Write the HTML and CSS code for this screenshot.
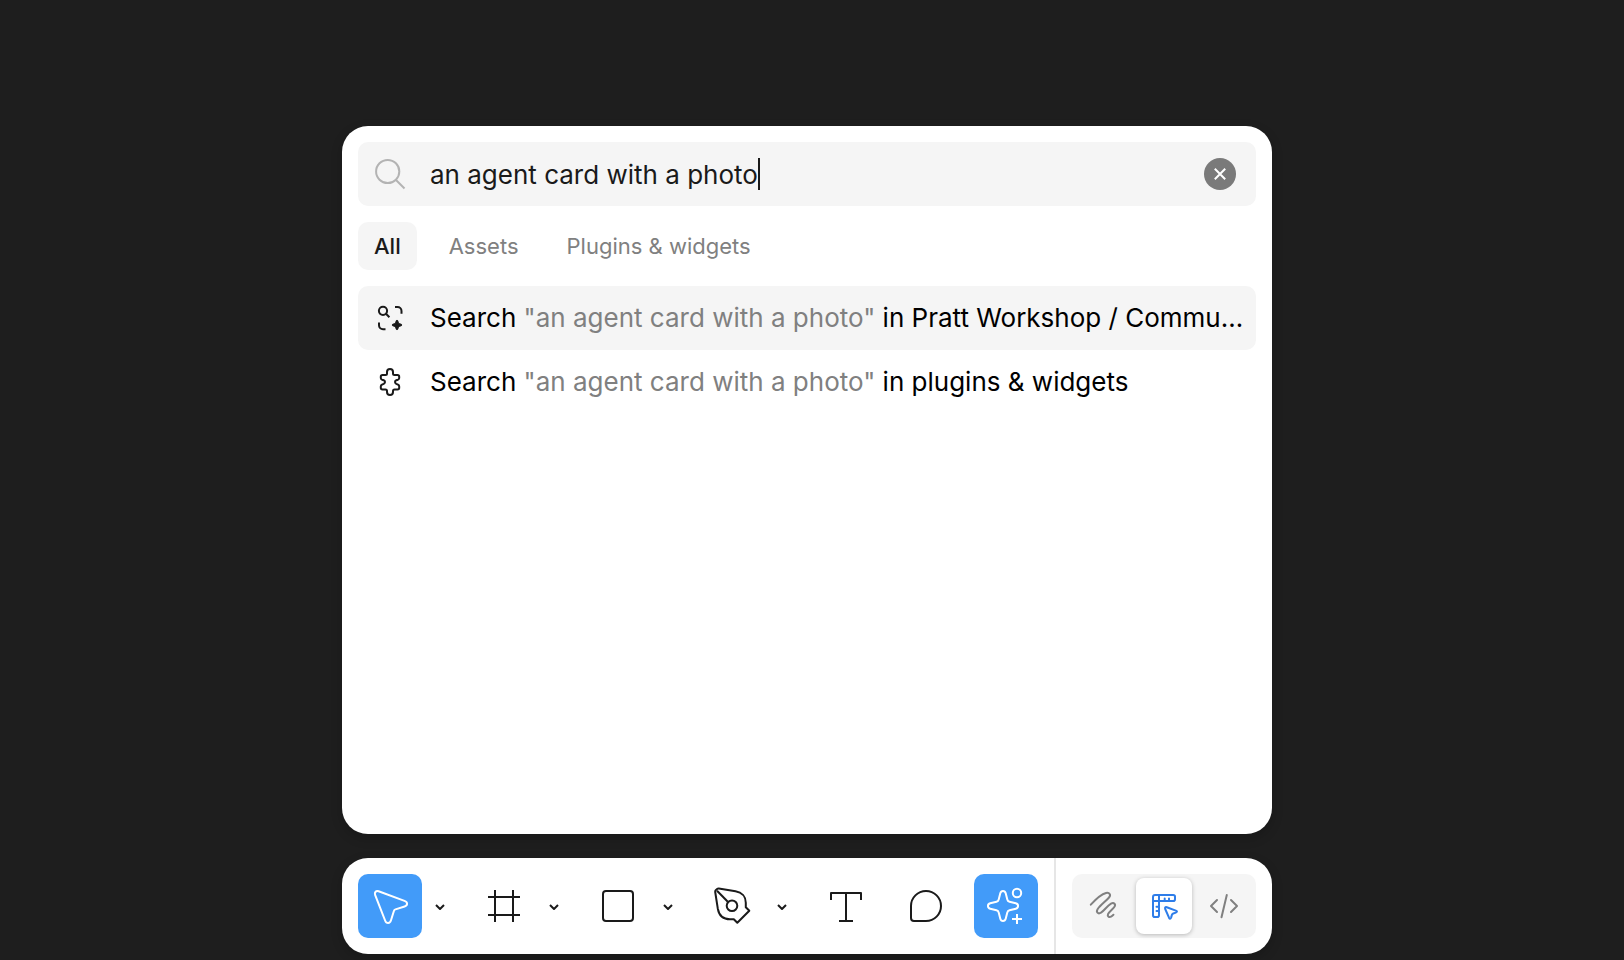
FILE: index.html
```html
<!DOCTYPE html>
<html lang="en">
<head>
<meta charset="utf-8">
<meta name="viewport" content="width=device-width, initial-scale=1">
<title>Quick actions</title>
<link rel="stylesheet" href="styles.css">
</head>
<body>
<main class="dock">
  <section class="panel" aria-label="Quick actions">
    <div class="search">
      <label class="search-label" for="query" aria-label="Search">
        <svg class="icon-muted" width="64" height="64" viewBox="0 0 64 64"><circle cx="29.700" cy="29.500" r="11.600"/><path d="M38 38l8.500 8.500"/></svg>
      </label>
      <div class="search-field">
        <input class="search-input" id="query" type="text" value="an agent card with a photo" size="26" autocomplete="off" spellcheck="false">
        <span class="caret"></span>
      </div>
      <button class="clear" type="button" aria-label="Clear search">
        <svg width="32" height="32" viewBox="0 0 32 32"><path d="M10.8 10.8l10.4 10.4M21.2 10.8L10.8 21.2"/></svg>
      </button>
    </div>
    <nav class="tabs" aria-label="Categories">
      <button class="tab tab-active" type="button">All</button>
      <button class="tab" type="button">Assets</button>
      <button class="tab" type="button">Plugins &amp; widgets</button>
    </nav>
    <div class="results">
      <button class="result result-active" type="button">
        <svg width="64" height="64" viewBox="0 0 64 64"><circle cx="25" cy="24.8" r="4.1"/><path d="M28 27.8l3.4 3.4M37 21h2.5a4 4 0 0 1 4 4v2.8M21 36.5v2.8a4 4 0 0 0 4 4h2.5"/><path class="solid" d="M39 34.2c.6 0 .8.5 1 1.2.4 1.5 1.1 2.2 2.6 2.6.7.2 1.2.4 1.2 1s-.5.8-1.2 1c-1.500.4-2.200 1.100-2.600 2.600-.2.7-.4 1.200-1 1.200s-.8-.5-1-1.200c-.4-1.500-1.100-2.200-2.600-2.600-.7-.2-1.200-.4-1.200-1s.5-.8 1.200-1c1.500-.4 2.200-1.100 2.600-2.600.2-.7.4-1.200 1-1.200z"/></svg>
        <span class="result-text">Search <span class="quoted">"an agent card with a photo"</span> in Pratt Workshop / Commu…</span>
      </button>
      <button class="result" type="button">
        <svg width="64" height="64" viewBox="0 0 64 64"><path d="M29 22a3 3 0 0 1 6 0v1.500q0 1.500 1.500 1.500H39.500q1.700 0 1.700 1.700V28q0 1.200-1.200 1.700l-1.700.6q-1.300.5-1.300 1.700t1.300 1.900l1.700.8q1.200.6 1.200 1.800v1.200q0 1.700-1.700 1.700H36.500q-1.500 0-1.500 1.500V42a3 3 0 0 1-6 0v-1.100q0-1.500-1.500-1.500H24.500q-1.700 0-1.700-1.700v-1.200q0-1.200 1.200-1.800l1.700-.8q1.300-.7 1.300-1.900t-1.300-1.700l-1.700-.6q-1.200-.5-1.200-1.700v-1.300q0-1.700 1.700-1.700h3q1.500 0 1.500-1.500z"/></svg>
        <span class="result-text">Search <span class="quoted">"an agent card with a photo"</span> in plugins &amp; widgets</span>
      </button>
    </div>
  </section>

  <section class="toolbar" aria-label="Tools">
    <div class="tools">
      <div class="tool-group">
        <button class="tool tool-active" type="button" aria-label="Move"><svg width="64" height="64" viewBox="0 0 64 64"><path d="M20.600 17.200l25.900 9.700c3.400 1.300 3.400 4.600.1 5.600l-9.100 2.900a2.500 2.500 0 0 0-1.600 1.600L33 46.300c-1.100 3.600-4.600 3.600-5.900.2l-10-25.700c-.9-2.400 1-4.500 3.500-3.600z"/></svg></button>
        <button class="more" type="button" aria-label="More move tools"><svg width="32" height="64" viewBox="0 0 32 64"><path d="M12 31l4 4 4-4"/></svg></button>
      </div>
      <div class="tool-group">
        <button class="tool" type="button" aria-label="Frame"><svg width="64" height="64" viewBox="0 0 64 64"><path d="M23 16v32M41 16v32M16 23h32M16 41h32"/></svg></button>
        <button class="more" type="button" aria-label="More region tools"><svg width="32" height="64" viewBox="0 0 32 64"><path d="M12 31l4 4 4-4"/></svg></button>
      </div>
      <div class="tool-group">
        <button class="tool" type="button" aria-label="Rectangle"><svg width="64" height="64" viewBox="0 0 64 64"><rect x="17" y="17" width="30" height="30" rx="3"/></svg></button>
        <button class="more" type="button" aria-label="More shapes"><svg width="32" height="64" viewBox="0 0 32 64"><path d="M12 31l4 4 4-4"/></svg></button>
      </div>
      <div class="tool-group">
        <button class="tool" type="button" aria-label="Pen"><svg width="64" height="64" viewBox="0 0 64 64"><path d="M15.200 18q-.2-1 .5-1.700l1.400-1.200q.7-.6 1.700-.5L35.500 17.200c6.500 1 10.300 5.500 10.300 11.500v4.500l3.500 3.500L37.300 48.700l-3.500-3.500H30c-6.500 0-11-4-12.200-10.500z"/><path d="M17 16.700l10.800 11"/><circle cx="32" cy="31.800" r="5.300"/></svg></button>
        <button class="more" type="button" aria-label="More drawing tools"><svg width="32" height="64" viewBox="0 0 32 64"><path d="M12 31l4 4 4-4"/></svg></button>
      </div>
      <button class="tool" type="button" aria-label="Text"><svg width="64" height="64" viewBox="0 0 64 64"><path d="M17 26v-7h30v7M32 19v28M25 47h14"/></svg></button>
      <button class="tool" type="button" aria-label="Comment"><svg width="64" height="64" viewBox="0 0 64 64"><path d="M17 32a15 15 0 1 1 15 15H20a3 3 0 0 1-3-3z"/></svg></button>
      <button class="tool tool-active" type="button" aria-label="Actions"><svg width="64" height="64" viewBox="0 0 64 64"><path d="M26.300 19.200c.8-3 4.600-3 5.400 0l1.600 6.300a3 3 0 0 0 2.200 2.200l6.300 1.600c3 .8 3 4.600 0 5.400l-6.300 1.600a3 3 0 0 0-2.200 2.200l-1.600 6.300c-.8 3-4.600 3-5.400 0l-1.600-6.300a3 3 0 0 0-2.200-2.200l-6.300-1.600c-3-.8-3-4.600 0-5.400l6.300-1.600a3 3 0 0 0 2.200-2.200z"/><circle cx="43" cy="19" r="4.200"/><path d="M43 40v10M38 45h10"/></svg></button>
    </div>
    <div class="modes">
      <div class="mode-switch">
        <button class="mode" type="button" aria-label="Draw"><svg width="56" height="56" viewBox="0 0 56 56"><path d="M14.800 26.700C20 21 26 16 30 15c3.500-.8 5.300 1.800 3 4.500-3 3.500-9 8-11.300 11.500-2 3 .3 5.500 3.300 3.700 3.500-2.200 6-6.700 10-9 3-1.700 5.200.7 3.300 3.300-1.600 2.200-5.200 4.500-6.300 7.200-1 2.400 1.300 3.400 3 2.500q1.500-.8 2.500-2"/></svg></button>
        <button class="mode mode-active" type="button" aria-label="Design"><svg width="56" height="56" viewBox="0 0 56 56"><path d="M19 17h18.200q1.800 0 1.800 1.800v2.400q0 1.800-1.800 1.800H23v14.200q0 1.800-1.800 1.800h-2.400q-1.800 0-1.800-1.800V19q0-2 2-2zM23 17v6h-6M28.700 20.500V23M33 20.500V23M20.500 28.700H23M20.500 33H23"/><path d="M30.800 29.200l9 3.400q2.400 1 0 2l-2.500.9q-1 .4-1.400 1.400l-.8 2.700q-1 2.400-2.100.1l-3.800-8.700q-.7-2.300 1.600-1.800z"/></svg></button>
        <button class="mode" type="button" aria-label="Dev Mode"><svg width="56" height="56" viewBox="0 0 56 56"><path d="M21 22l-6 6 6 6M35 22l6 6-6 6M30.800 17l-5.300 22.200"/></svg></button>
      </div>
    </div>
  </section>
</main>
</body>
</html>
```
FILE: styles.css
```css
* { box-sizing: border-box; }

body {
  margin: 0;
  min-height: 100vh;
  background: #1e1e1e;
  font-family: Inter, "Liberation Sans", sans-serif;
  color: #1a1a1a;
}

button {
  border: 0;
  padding: 0;
  background: none;
  font: inherit;
  color: inherit;
}

svg {
  display: block;
  flex: none;
  fill: none;
  stroke: currentColor;
  stroke-width: 2;
  stroke-linejoin: round;
}

.dock {
  display: flex;
  flex-direction: column;
  align-items: center;
  gap: 24px;
  min-height: 100vh;
  padding: 126px 10px 6px 0;
}

.panel, .toolbar {
  width: 930px;
  max-width: 100%;
  border-radius: 26px;
  background: #fff;
  box-shadow: 0 4px 12px rgba(0, 0, 0, 0.2);
}

.panel {
  flex: 1;
  padding: 16px;
}

.search {
  display: flex;
  align-items: center;
  gap: 8px;
  height: 64px;
  padding-right: 20px;
  border-radius: 10px;
  background: #f5f5f5;
}

.icon-muted { color: #b3b3b3; }

.search-field {
  display: flex;
  flex: 1;
  align-items: center;
}

.search-input {
  field-sizing: content;
  border: 0;
  padding: 2px 0 0;
  outline: 0;
  background: none;
  font: 400 26px/32px Inter, "Liberation Sans", sans-serif;
  color: #1a1a1a;
}

.caret {
  width: 2px;
  height: 32px;
  background: #1a1a1a;
}

.clear {
  border-radius: 50%;
  background: #7a7a7a;
  color: #fff;
}

.tabs {
  display: flex;
  gap: 16px;
  margin: 16px 0;
}

.tab {
  height: 48px;
  padding: 0 16px;
  border-radius: 10px;
  font-size: 22px;
  line-height: 32px;
  color: #808080;
}

.tab-active {
  background: #f5f5f5;
  font-weight: 500;
  color: #1a1a1a;
}

.results {
  display: flex;
  flex-direction: column;
}

.result {
  display: flex;
  align-items: center;
  gap: 8px;
  height: 64px;
  border-radius: 10px;
  text-align: left;
  font-size: 26px;
  line-height: 32px;
}

.result-active { background: #f5f5f5; }

.result-text {
  white-space: nowrap;
  color: #000;
}

.quoted { color: #808080; }

.solid {
  fill: currentColor;
  stroke-width: 1;
}

.toolbar {
  display: flex;
  justify-content: space-between;
}

.tools {
  display: flex;
  gap: 16px;
  padding: 16px;
}

.tool-group {
  display: flex;
  gap: 2px;
}

.tool { border-radius: 10px; }

.tool-active {
  background: #429bf9;
  color: #fff;
}

.modes {
  padding: 16px;
  border-left: 2px solid #e6e6e6;
}

.mode-switch {
  display: flex;
  gap: 4px;
  padding: 4px;
  border-radius: 10px;
  background: #f5f5f5;
}

.mode {
  border-radius: 8px;
  color: #808080;
}

.mode svg { stroke-linecap: round; }

.mode-active {
  background: #fff;
  color: #2e7de9;
  box-shadow: 0 1px 4px rgba(0, 0, 0, 0.25);
}
```
